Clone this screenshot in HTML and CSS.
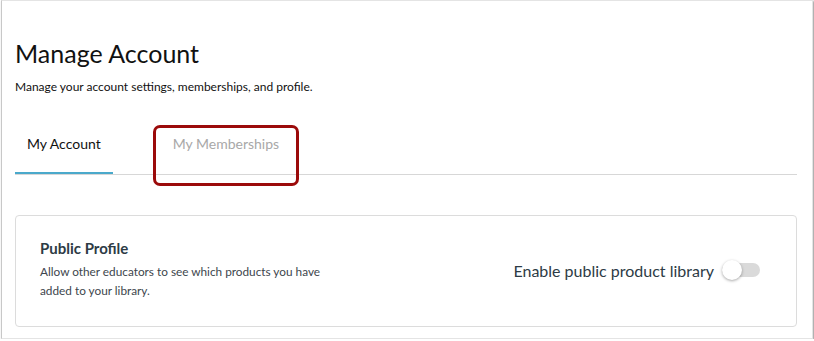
FILE: index.html
```html
<!DOCTYPE html>
<html lang="en">
<head>
    <meta charset="UTF-8">
    <meta name="viewport" content="width=device-width, initial-scale=1.0">
    <title>Manage Account</title>
    <link rel="stylesheet" href="styles.css">
</head>
<body>
    <div class="account-frame">
        <div class="page-header">
            <h1>Manage Account</h1>
            <p>Manage your account settings, memberships, and profile.</p>
        </div>

        <div class="tabs">
            <a href="#" class="tab active">My Account</a>
            <a href="#" class="tab highlighted">My Memberships</a>
        </div>

        <div class="profile-card">
            <div class="profile-info">
                <h2>Public Profile</h2>
                <p>Allow other educators to see which products you have<br>added to your library.</p>
            </div>
            <label class="switch-row">
                <span class="switch-label">Enable public product library</span>
                <span class="switch"><span class="switch-knob"></span></span>
            </label>
        </div>
    </div>
</body>
</html>
```

FILE: styles.css
```css
* {
    margin: 0;
    padding: 0;
    box-sizing: border-box;
}

body {
    font-family: Lato, "Noto Sans", sans-serif;
    background: white;
    color: #2d3b45;
}

.account-frame {
    width: 812px;
    height: 339px;
    margin-left: 1px;
    padding: 38px 15px 0 13px;
    background: white;
    border: 1px solid #e4e4e4;
    border-left-color: #c8c8c8;
    box-shadow: 1px 1px 2px rgba(0,0,0,0.45);
}

.page-header h1 {
    font-size: 25px;
    font-weight: 400;
    line-height: 29px;
    color: #111;
}

.page-header p {
    font-size: 12px;
    line-height: 16px;
    margin-top: 11px;
    color: #111;
}

.tabs {
    display: flex;
    margin-top: 29px;
    border-bottom: 1px solid #d7d7d7;
}

.tab {
    display: block;
    padding: 0 12px;
    height: 50px;
    line-height: 39px;
    font-size: 14px;
    text-decoration: none;
    color: #2d3b45;
    border-bottom: 2px solid transparent;
}

.tab.active {
    color: #111;
    border-bottom-color: #4aa9cb;
}

.tab.highlighted {
    color: #a8a8a8;
    margin-left: 48px;
    position: relative;
}

/* annotation box round the second tab */
.tab.highlighted::after {
    content: "";
    position: absolute;
    top: 1px;
    left: -8px;
    width: 140px;
    height: 55px;
    border: 3px solid #9b0a0a;
    border-radius: 7px;
}

.profile-card {
    margin-top: 40px;
    height: 112px;
    border: 1px solid #dcdcdc;
    border-radius: 4px;
    padding: 22px 36px 0 24px;
    display: flex;
    justify-content: space-between;
}

.profile-info h2 {
    font-size: 15px;
    font-weight: 700;
    line-height: 20px;
    color: #2d3b45;
}

.profile-info p {
    font-size: 11.8px;
    line-height: 19px;
    margin-top: 4px;
    color: #3d464d;
}

.switch-row {
    display: flex;
    align-items: center;
    gap: 8px;
    margin-top: 21px;
    height: 22px;
}

.switch-label {
    font-size: 16px;
    color: #2d3b45;
}

.switch {
    position: relative;
    width: 38px;
    height: 14px;
    border-radius: 7px;
    background: #dadada;
}

.switch-knob {
    position: absolute;
    left: 0;
    top: -3px;
    width: 20px;
    height: 20px;
    border-radius: 50%;
    background: white;
    box-shadow: 0 1px 3px rgba(0,0,0,0.35);
}
```
